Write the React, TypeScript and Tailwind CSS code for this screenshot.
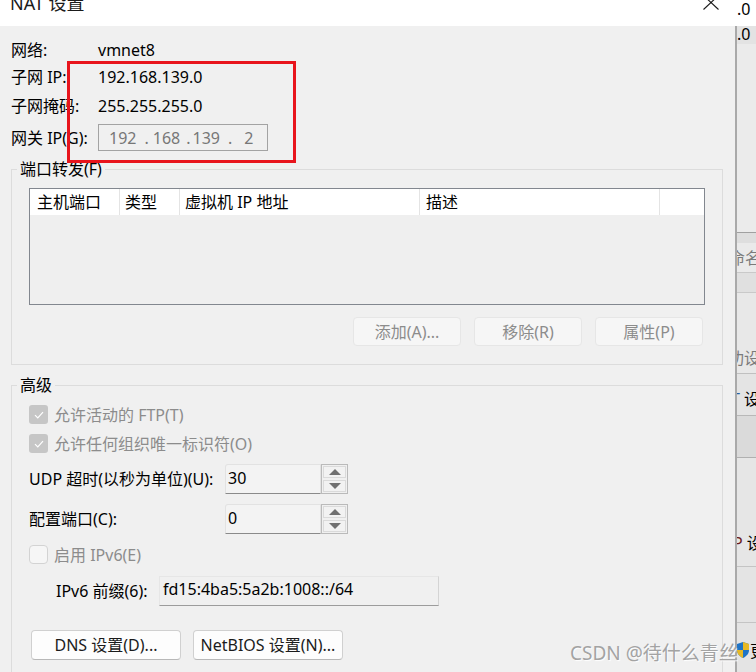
import React from 'react';

function CheckedBox() {
  return (
    <span className="w-[19px] h-[19px] rounded-[3px] bg-[#c6c6c6] flex items-center justify-center shrink-0">
      <svg width="10" height="8" viewBox="0 0 10 8">
        <path d="M1 4.2 L3.8 7 L9 1.2" fill="none" stroke="#ffffff" strokeWidth="1.2" />
      </svg>
    </span>
  );
}

function EmptyBox() {
  return <span className="w-[19px] h-[19px] rounded-[4px] bg-[#f6f6f6] border border-[#d3d3d3] shrink-0" />;
}

function Triangle({ up }: { up?: boolean }) {
  return (
    <svg width="12" height="6" viewBox="0 0 12 6">
      <path d={up ? 'M0 6 L6 0 L12 6 Z' : 'M0 0 L12 0 L6 6 Z'} fill="#707070" />
    </svg>
  );
}

function Spin({ value }: { value: string }) {
  return (
    <div className="flex h-[30px]">
      <div className="w-[96px] h-full bg-[#f3f3f3] border border-[#e2e2e2] border-b-[#8a8a8a] rounded-tl-[3px] pl-[2px] flex items-center pb-[3px]">
        {value}
      </div>
      <div className="w-[27px] h-full border border-[#bababa] p-[1px] flex flex-col gap-[2px] bg-[#f0f0f0]">
        <div className="flex-1 border border-[#dadada] bg-[#f2f2f2] flex items-center justify-center">
          <Triangle up />
        </div>
        <div className="flex-1 border border-[#dadada] bg-[#f2f2f2] flex items-center justify-center">
          <Triangle />
        </div>
      </div>
    </div>
  );
}

function DisabledButton({ label }: { label: string }) {
  return (
    <div className="w-[108px] h-[29px] rounded-[4px] bg-[#f6f6f6] border border-[#e6e6e6] text-[#8c8c8c] flex items-center justify-center">
      {label}
    </div>
  );
}

function Button({ label }: { label: string }) {
  return (
    <div className="w-[150px] h-[30px] rounded-[4px] bg-[#fdfdfd] border border-[#d0d0d0] border-b-[#b8b8b8] text-[#1b1b1b] flex items-center justify-center">
      {label}
    </div>
  );
}

export default function App() {
  return (
    <div className="relative w-[756px] h-[672px] overflow-hidden flex bg-[#f0f0f0] text-[16px] leading-[20px] text-black font-['Noto_Sans','Noto_Sans_CJK_SC',sans-serif]">
      {/* dialog */}
      <div className="w-[735px] flex flex-col">
        <div className="h-[26px] bg-white flex justify-between items-start overflow-hidden shrink-0">
          <span className="pl-[10px] mt-[-7px] text-[18px] leading-[20px] text-[#1a1a1a]">NAT 设置</span>
          <svg className="mt-[-5px] mr-[16px]" width="16" height="15" viewBox="0 0 16 15">
            <path d="M0.5 0.5 L15.5 14.5 M15.5 0.5 L0.5 14.5" stroke="#1a1a1a" strokeWidth="1.1" />
          </svg>
        </div>

        <div className="relative flex-1 bg-[#f0f0f0] pl-[11px] pt-[12px] flex flex-col">
          <div className="h-[24px] flex items-center">
            <span className="w-[87px]">网络:</span>
            <span>vmnet8</span>
          </div>
          <div className="h-[30px] flex items-center">
            <span className="w-[87px]">子网 IP:</span>
            <span>192.168.139.0</span>
          </div>
          <div className="h-[28px] flex items-center">
            <span className="w-[87px]">子网掩码:</span>
            <span>255.255.255.0</span>
          </div>
          <div className="h-[35px] flex items-center">
            <span className="w-[87px]">网关 IP(G):</span>
            <div className="w-[170px] h-[27px] border border-[#a3a3a3] bg-[#f0f0f0] flex items-center pl-[10px] text-[#777777] whitespace-pre">
              <span>192</span>
              <span className="ml-[8px]">.</span>
              <span className="ml-[4px]">168</span>
              <span className="ml-[6px]">.</span>
              <span className="ml-[2px]">139</span>
              <span className="ml-[8px]">.</span>
              <span className="ml-[12px]">2</span>
            </div>
          </div>

          {/* highlight box */}
          <div className="absolute left-[67px] top-[35px] w-[229px] h-[102px] border-[3px] border-[#e8141c]" />

          <fieldset className="mt-[5px] w-[712px] border border-[#dcdcdc] shrink-0">
            <legend className="ml-[5px] px-[3px] leading-[18px]">端口转发(F)</legend>
            <div className="px-[17px] pt-[10px] pb-[18px]">
              <div className="w-[676px] h-[117px] border border-[#82878f] bg-[#efefef]">
                <div className="h-[26px] bg-white flex">
                  <div className="w-[90px] border-r border-[#e4e4e4] pl-[7px] flex items-center">主机端口</div>
                  <div className="w-[60px] border-r border-[#e4e4e4] pl-[5px] flex items-center">类型</div>
                  <div className="w-[240px] border-r border-[#e4e4e4] pl-[5px] flex items-center">虚拟机 IP 地址</div>
                  <div className="w-[240px] border-r border-[#e4e4e4] pl-[6px] flex items-center">描述</div>
                  <div className="flex-1" />
                </div>
              </div>
              <div className="mt-[12px] flex justify-end gap-[13px] pr-[2px]">
                <DisabledButton label="添加(A)..." />
                <DisabledButton label="移除(R)" />
                <DisabledButton label="属性(P)" />
              </div>
            </div>
          </fieldset>

          <fieldset className="mt-[11px] w-[712px] border border-[#dcdcdc] shrink-0">
            <legend className="ml-[5px] px-[3px] leading-[18px]">高级</legend>
            <div className="pl-[17px] pt-[6px] pb-[20px] flex flex-col">
              <div className="h-[29px] flex items-center gap-[6px] text-[#8c8c8c]">
                <CheckedBox />
                <span>允许活动的 FTP(T)</span>
              </div>
              <div className="h-[29px] flex items-center gap-[6px] text-[#8c8c8c]">
                <CheckedBox />
                <span>允许任何组织唯一标识符(O)</span>
              </div>
              <div className="mt-[6px] h-[30px] flex items-center">
                <span className="w-[196px]">UDP 超时(以秒为单位)(U):</span>
                <Spin value="30" />
              </div>
              <div className="mt-[10px] h-[30px] flex items-center">
                <span className="w-[196px]">配置端口(C):</span>
                <Spin value="0" />
              </div>
              <div className="mt-[6px] h-[29px] flex items-center gap-[6px] text-[#8c8c8c]">
                <EmptyBox />
                <span>启用 IPv6(E)</span>
              </div>
              <div className="mt-[7px] h-[30px] flex items-center pl-[27px]">
                <span className="w-[103px]">IPv6 前缀(6):</span>
                <div className="w-[280px] h-[30px] bg-[#f0f0f0] border border-[#e6e6e6] border-r-[#d4d4d4] border-b-[#9c9c9c] pl-[3px] pb-[4px] flex items-center">
                  fd15:4ba5:5a2b:1008::/64
                </div>
              </div>
              <div className="mt-[24px] flex gap-[12px] pl-[2px]">
                <Button label="DNS 设置(D)..." />
                <Button label="NetBIOS 设置(N)..." />
              </div>
            </div>
          </fieldset>
        </div>
      </div>

      {/* window edge */}
      <div className="w-[2px] flex flex-col shrink-0">
        <div className="h-[26px] bg-white shrink-0" />
        <div className="flex-1 bg-[#a9a9a9]" />
      </div>

      {/* background window strip */}
      <div className="w-[19px] h-[672px] flex flex-col overflow-hidden whitespace-nowrap shrink-0">
        <div className="h-[26px] shrink-0 bg-white text-[16px] leading-[18px] text-black">.0</div>
        <div className="h-[18px] shrink-0 bg-[#e3e3e3] text-[16px] leading-[16px] text-black">.0</div>
        <div className="h-[188px] shrink-0 bg-[#ebebeb]" />
        <div className="h-[1px] shrink-0 bg-[#a0a0a0]" />
        <div className="h-[10px] shrink-0 bg-[#dedede]" />
        <div className="h-[29px] shrink-0 bg-[#eaeaea] text-[#7b7b7b] flex items-center ml-[-8px]">命名</div>
        <div className="h-[1px] shrink-0 bg-[#c9c9c9]" />
        <div className="h-[19px] shrink-0 bg-[#e0e0e0]" />
        <div className="h-[1px] shrink-0 bg-[#c9c9c9]" />
        <div className="h-[50px] shrink-0 bg-[#e8e8e8]" />
        <div className="h-[30px] shrink-0 bg-[#e8e8e8] text-[#7b7b7b] flex items-center ml-[-9px]">功设</div>
        <div className="h-[1px] shrink-0 bg-[#c0c0c0]" />
        <div className="h-[41px] shrink-0 bg-[#e4e4e4] flex items-center ml-[-6px] pt-[8px]">
          <span className="text-[#2a5fa0]">T</span>
          <span className="ml-[4px]">设</span>
        </div>
        <div className="h-[1px] shrink-0 bg-[#b8b8b8]" />
        <div className="h-[41px] shrink-0 bg-[#dadada]" />
        <div className="h-[1px] shrink-0 bg-[#b0b0b0]" />
        <div className="h-[72px] shrink-0 bg-[#e6e6e6]" />
        <div className="h-[26px] shrink-0 bg-[#e6e6e6] flex items-center ml-[-4px]">
          <span className="text-[#6b1a1a]">P</span>
          <span className="ml-[4px]">设</span>
        </div>
        <div className="h-[10px] shrink-0 bg-[#e6e6e6]" />
        <div className="h-[1px] shrink-0 bg-[#c4c4c4]" />
        <div className="h-[55px] shrink-0 bg-[#e4e4e4]" />
        <div className="h-[1px] shrink-0 bg-[#c4c4c4]" />
        <div className="h-[19px] shrink-0 bg-[#e4e4e4]" />
        <div className="flex-1 bg-[#e4e4e4] flex items-start gap-[1px]">
          <svg width="12" height="16" viewBox="0 0 12 16" className="shrink-0">
            <path d="M6 0 L12 2 L12 8 C12 12 9 14.5 6 16 C3 14.5 0 12 0 8 L0 2 Z" fill="#1f74c6" />
            <path d="M6 0 L12 2 L12 8 L6 8 Z" fill="#e8b923" />
            <path d="M6 8 L0 8 C0 12 3 14.5 6 16 Z" fill="#e8b923" />
          </svg>
          <span className="leading-[18px]">更</span>
        </div>
      </div>

      {/* watermark */}
      <div className="absolute left-[570px] top-[642px] text-[19px] leading-[22px] text-[#a3a3a3] whitespace-nowrap [text-shadow:1px_1px_1px_#ffffff]">
        CSDN @待什么青丝
      </div>
    </div>
  );
}
